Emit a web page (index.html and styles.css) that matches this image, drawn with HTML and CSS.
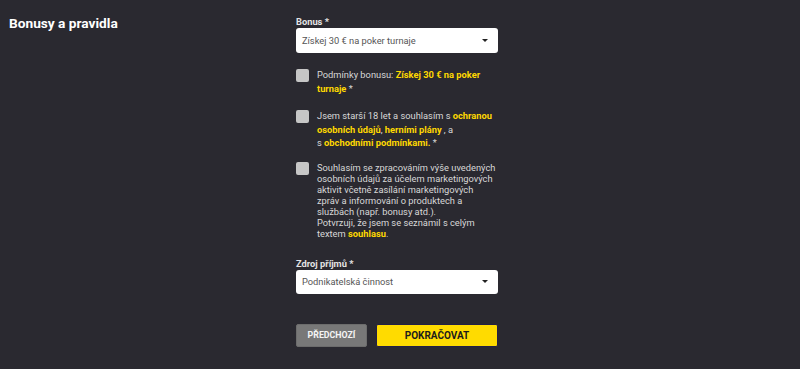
FILE: index.html
```html
<!DOCTYPE html>
<html lang="cs">
<head>
<meta charset="utf-8">
<link rel="stylesheet" href="styles.css">
</head>
<body>
<div class="page">
  <h2 class="title">Bonusy a pravidla</h2>
  <form class="form">
    <label class="label">Bonus *</label>
    <div class="select"><span>Získej 30 € na poker turnaje</span><span class="arrow"></span></div>

    <div class="check row1">
      <span class="box"></span>
      <p class="text">Podmínky bonusu: <b class="link">Získej 30 € na poker turnaje</b> *</p>
    </div>
    <div class="check row2">
      <span class="box"></span>
      <p class="text">Jsem starší 18 let a souhlasím s <b class="link">ochranou osobních údajů</b>, <b class="link">herními plány</b> , a s&nbsp;<b class="link">obchodními podmínkami.</b> *</p>
    </div>
    <div class="check row3">
      <span class="box"></span>
      <p class="text tight">Souhlasím se zpracováním výše uvedených osobních údajů za účelem marketingových aktivit včetně zasílání marketingových zpráv a informování o produktech a službách (např. bonusy atd.).<br>Potvrzuji, že jsem se seznámil s celým textem <b class="link">souhlasu</b>.</p>
    </div>

    <label class="label label2">Zdroj příjmů *</label>
    <div class="select select2"><span>Podnikatelská činnost</span><span class="arrow"></span></div>

    <div class="buttons">
      <button type="button" class="btn prev">PŘEDCHOZÍ</button>
      <button type="button" class="btn next">POKRAČOVAT</button>
    </div>
  </form>
</div>
</body>
</html>
```
FILE: styles.css
```css
html, body {
  margin: 0;
  padding: 0;
  background: #2a2930;
  font-family: Roboto, "Liberation Sans", sans-serif;
  color: #d8d8d8;
}
.page {
  display: grid;
  grid-template-columns: 296px 204px;
  height: 369px;
}
.title {
  margin: 0;
  padding: 14px 0 0 9px;
  font-size: 13.7px;
  line-height: 18px;
  font-weight: 700;
  color: #fff;
}
.form {
  padding-top: 15px;
  display: flex;
  flex-direction: column;
}
.label {
  font-size: 9.3px;
  font-weight: 700;
  line-height: 13px;
  color: #e4e4e4;
}
.label2 { margin-top: 18px; }
.select {
  width: 202px;
  height: 25px;
  box-sizing: border-box;
  background: #fff;
  border-radius: 3px;
  display: flex;
  align-items: center;
  justify-content: space-between;
  padding: 0 10px 0 6px;
  font-size: 9.3px;
  color: #555;
}
.select2 { height: 24px; }
.arrow {
  width: 0;
  height: 0;
  border-left: 3px solid transparent;
  border-right: 3px solid transparent;
  border-top: 3.5px solid #222;
}
.check {
  display: flex;
  align-items: flex-start;
  gap: 8px;
}
.row1 { margin-top: 15px; }
.row2 { margin-top: 14px; }
.row3 { margin-top: 12px; }
.box {
  flex: none;
  width: 13px;
  height: 13px;
  background: #c6c6c6;
  border-radius: 2px;
  margin-top: 0.5px;
}
.text {
  margin: 0;
  width: 179.3px;
  font-size: 9.3px;
  line-height: 13.5px;
  color: #d8d8d8;
}
.text.tight { line-height: 11px; }
.link { color: #ffd800; font-weight: 700; }
.buttons {
  margin-top: 30px;
  display: flex;
  gap: 9px;
}
.btn {
  height: 23px;
  box-sizing: border-box;
  border-radius: 2px;
  font-family: Roboto, "Liberation Sans", sans-serif;
  font-weight: 700;
  padding: 0;
  cursor: pointer;
}
.prev {
  width: 71px;
  background: #787878;
  color: #f4f4f4;
  border: 1px solid #6c6c6c;
  font-size: 8.8px;
}
.next {
  width: 122px;
  background: #ffdb00;
  color: #1c1c1c;
  border: 1px solid #232045;
  font-size: 10px;
}
```
